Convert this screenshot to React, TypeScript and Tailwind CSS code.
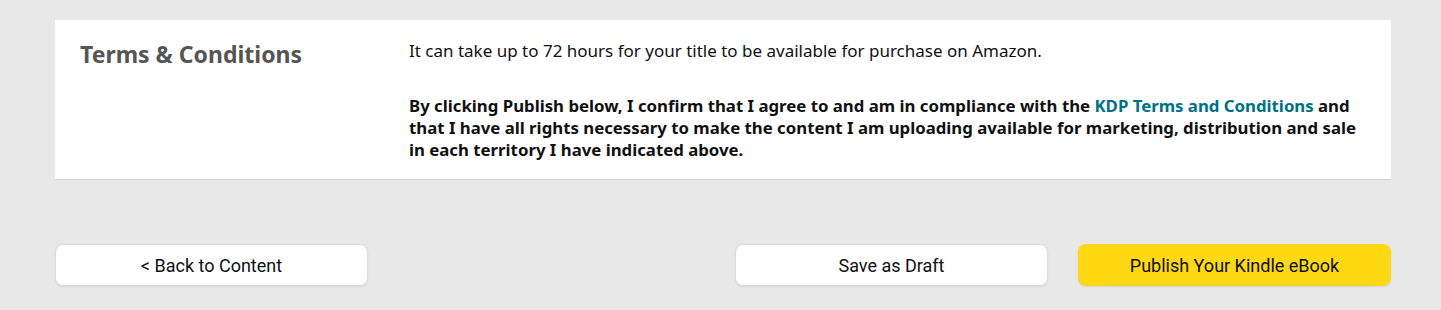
import React from 'react';

const Button = ({ label, primary = false }: { label: string; primary?: boolean }) => (
    <button
        className={
            primary
                ? "w-[313px] h-[42px] rounded-lg bg-[#fed813] text-[#0f1111] text-[18px] shadow-[0_1px_2px_rgba(0,0,0,0.08)]"
                : "w-[313px] h-[42px] rounded-lg bg-white border border-[#dcdcdc] text-[#0f1111] text-[18px] shadow-[0_1px_2px_rgba(0,0,0,0.08)]"
        }
        style={{ fontFamily: 'Roboto, "Noto Sans", sans-serif' }}
    >
        {label}
    </button>
);

export default function App() {
    return (
        <div className="w-full h-[310px] bg-[#e8e8e8] pt-5 pl-[55px] pr-[50px]" style={{ fontFamily: '"Noto Sans", "Open Sans", sans-serif' }}>
            {/* Terms card */}
            <div className="flex bg-white border-b border-[#d5d5d5] h-[160px]">
                <div className="w-[354px] pl-[25px] pt-[18px]">
                    <h2 className="text-[23px] font-bold text-[#555555] leading-[32px]">Terms & Conditions</h2>
                </div>
                <div className="flex-1 pt-[20px] pr-[28px] text-[#111111] text-[17px] leading-[22px]">
                    <p>It can take up to 72 hours for your title to be available for purchase on Amazon.</p>
                    <p className="font-bold text-[16.8px] mt-[33px]">
                        By clicking Publish below, I confirm that I agree to and am in compliance with the{' '}
                        <a className="text-[#007185]">KDP Terms and Conditions</a> and that I have all rights necessary to make
                        the content I am uploading available for marketing, distribution and sale in each territory I have indicated above.
                    </p>
                </div>
            </div>

            {/* Actions */}
            <div className="flex items-center mt-[64px]">
                <Button label="< Back to Content" />
                <div className="flex-1" />
                <div className="flex gap-[30px]">
                    <Button label="Save as Draft" />
                    <Button label="Publish Your Kindle eBook" primary />
                </div>
            </div>
        </div>
    );
}
